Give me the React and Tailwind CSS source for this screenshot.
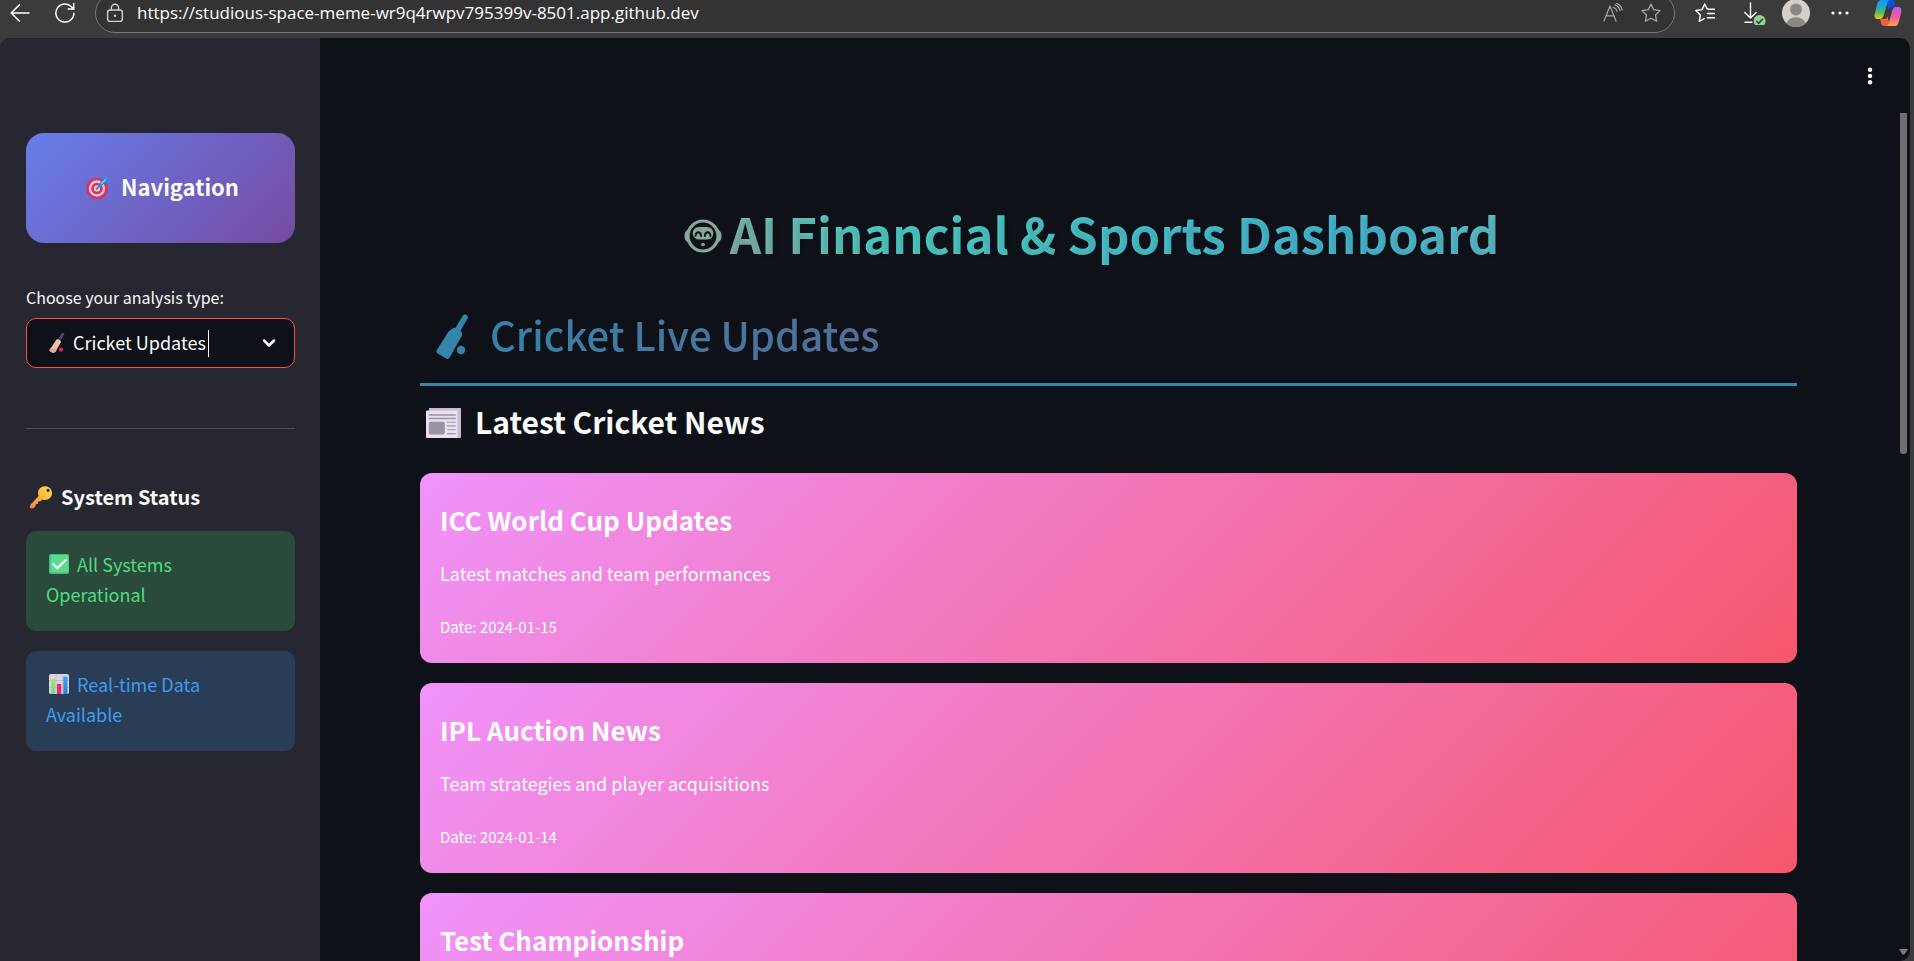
import React from "react";

const NEWS = [
  { title: "ICC World Cup Updates", text: "Latest matches and team performances", date: "2024-01-15" },
  { title: "IPL Auction News", text: "Team strategies and player acquisitions", date: "2024-01-14" },
  { title: "Test Championship" },
];

const line = { fill: "none", stroke: "currentColor", strokeLinecap: "round", strokeLinejoin: "round" };

function BackIcon() {
  return (
    <svg className="h-5 w-5" viewBox="0 0 20 20" {...line} strokeWidth="1.5">
      <path d="M19 10H1.5M9.5 1.8 1.2 10l8.3 8.2" />
    </svg>
  );
}

function ReloadIcon() {
  return (
    <svg className="h-5 w-5" viewBox="0 0 20 20" {...line} strokeWidth="1.5">
      <path d="M18.9 10.2A9 9 0 1 1 16.4 3.8L18.6 6" />
      <path d="M18.7.6v5.5h-5.4" />
    </svg>
  );
}

function LockIcon() {
  return (
    <svg className="h-5 w-5" viewBox="0 0 20 20" {...line} strokeWidth="1.4">
      <rect x="2.6" y="7" width="14.8" height="11.4" rx="2.4" />
      <path d="M6.4 7V4.8a3.6 3.6 0 0 1 7.2 0V7" />
      <circle cx="10" cy="12.7" r="1.2" fill="currentColor" stroke="none" />
    </svg>
  );
}

function ReadAloudIcon() {
  return (
    <svg className="h-5 w-5" viewBox="0 0 20 20" {...line} strokeWidth="1.2">
      <path d="M1 18 7 3l6 15M3.2 12.8h7.6" />
      <path d="M10.6 4.4c1.8.7 3 2 3.5 3.8M12 1.9c2.6.9 4.4 3 5 5.800M13.800.4c3 1.200 4.800 3.600 5.400 6.800" />
    </svg>
  );
}

function StarIcon() {
  return (
    <svg className="h-5 w-5" viewBox="0 0 20 20" {...line} strokeWidth="1.3">
      <path d="m10 1 2.700 5.700 6.300.9-4.500 4.400 1.100 6.300L10 15.300l-5.600 3 1.100-6.300L1 7.600l6.300-.9z" />
    </svg>
  );
}

function FavoritesIcon() {
  return (
    <svg className="h-5 w-5" viewBox="0 0 20 20" {...line} strokeWidth="1.4">
      <path d="M19.500 6.300h-5.800L12 5.600 9.700 1 7.100 6.600l-6.300.9 4.600 4.400-1.100 6.500 5.300-2.900" />
      <path d="M12.400 10.500h7.100M12.400 14.800h7.100" />
    </svg>
  );
}

function DownloadIcon() {
  return (
    <svg className="h-6 w-6" viewBox="0 0 24 24" {...line} strokeWidth="1.4">
      <path d="M8.500 2v15M2.800 11.500l5.700 5.600 5.700-5.600M3 21.300h7" />
      <circle cx="17.600" cy="20" r="6" fill="#8fd694" stroke="none" />
      <path d="m14.800 20.200 2 2 3.800-4" stroke="#2f3a30" strokeWidth="1.500" />
    </svg>
  );
}

function AvatarIcon() {
  return (
    <svg className="h-7 w-7" viewBox="0 0 28 28">
      <clipPath id="avatar-clip"><circle cx="14" cy="14" r="14" /></clipPath>
      <g clipPath="url(#avatar-clip)">
        <rect width="28" height="28" fill="#d3d0cc" />
        <circle cx="14" cy="10.500" r="6" fill="#8b8784" />
        <ellipse cx="14" cy="26" rx="9.800" ry="7.800" fill="#8b8784" />
      </g>
    </svg>
  );
}

function CopilotIcon() {
  return (
    <svg className="h-7 w-7" viewBox="0 0 28 28">
      <defs>
        <linearGradient id="cp-left" x1="0" y1="0" x2="0" y2="1">
          <stop offset="0" stopColor="#1795f2" /><stop offset=".35" stopColor="#1ba9d8" />
          <stop offset=".65" stopColor="#58b85c" /><stop offset="1" stopColor="#f2c811" />
        </linearGradient>
        <linearGradient id="cp-right" x1="0" y1="0" x2="0" y2="1">
          <stop offset="0" stopColor="#b05df0" /><stop offset=".5" stopColor="#ee5a9b" />
          <stop offset="1" stopColor="#ffa04d" />
        </linearGradient>
        <linearGradient id="cp-top" x1="0" y1="0" x2="1" y2="1">
          <stop offset="0" stopColor="#0a5fe0" /><stop offset="1" stopColor="#163fb8" />
        </linearGradient>
      </defs>
      <path d="M12 1h5.500c1.800 0 2.800 1 3.300 2.700l1.300 4.300h-4.300c-1.800 0-2.800.9-3.300 2.500z" fill="url(#cp-top)" />
      <path d="M16 27h-5.500c-1.800 0-2.800-1-3.300-2.700L6 20h4.300c1.800 0 2.800-.9 3.300-2.500z" fill="#f4603a" />
      <path d="M7.500 1h8.300c-1.300.3-2 1.300-2.500 3l-3.600 12.500c-.7 2.400-1.900 3.500-4.200 3.500H3.800C1 20 0 17.800.7 15L3.400 4.600C4 2.200 5.300 1 7.500 1z" fill="url(#cp-left)" />
      <path d="M20.500 27h-8.300c1.300-.3 2-1.300 2.500-3l3.600-12.500c.7-2.400 1.900-3.500 4.200-3.500h1.700c2.800 0 3.800 2.200 3.100 5l-2.700 10.400c-.6 2.400-1.900 3.600-4.100 3.600z" fill="url(#cp-right)" />
    </svg>
  );
}

function TargetIcon() {
  return (
    <svg className="h-6 w-6" viewBox="0 0 24 24">
      <circle cx="11" cy="13.500" r="10.800" fill="#dd2f5c" />
      <circle cx="11" cy="13.500" r="8.200" fill="#d8c8de" />
      <circle cx="11" cy="13.500" r="5.800" fill="#dd2f5c" />
      <circle cx="11" cy="13.500" r="3.200" fill="#d8c8de" />
      <path d="m10.500 14 6-6" stroke="#5b6678" strokeWidth="1.500" strokeLinecap="round" />
      <path d="m11.800 9.800 5.500-5.300L18.500 0l2 2.800L24 4.500l-1.500 3-4 .8-5 4.400z" fill="#2490dd" />
      <path d="m15 9 5-5" stroke="#6fd0fa" strokeWidth="1.200" />
    </svg>
  );
}

function BatIcon() {
  return (
    <svg className="h-5 w-4" viewBox="0 0 16 20">
      <path d="m13.800 1.200-4.600 7" stroke="#533e78" strokeWidth="3" strokeLinecap="round" />
      <path d="M7.700 6.300c1.600-.2 4 1 4.300 2.800L6.300 19c-1.800 1.500-5 .2-6-1.500z" fill="#ffbfa6" />
      <path d="m2 14.300 5.700 2.400L6.300 19c-1.800 1.500-5 .2-6-1.500z" fill="#ee9fae" />
      <circle cx="12" cy="16.500" r="2.200" fill="#ca2c55" />
    </svg>
  );
}

function BatSilhouette() {
  return (
    <svg className="h-[52px] w-8 text-[#3385aa]" viewBox="0 -6 32 52" fill="currentColor">
      <path d="M29 3.300 21.500 16" stroke="currentColor" strokeWidth="5.600" strokeLinecap="round" />
      <path d="M15.800 15c2-1.600 4.500-1.400 6.600-.2 2.400 1.400 4 3.500 3.600 6.200-.1.700-.4 1.400-.8 2L13.700 43.600c-.8 1.300-2 1.700-3.300 1L1.600 39.500c-1.300-.8-1.600-1.900-.9-3.200L12.500 17.500z" />
      <circle cx="25" cy="36" r="4.200" />
    </svg>
  );
}

function KeyIcon() {
  return (
    <svg className="h-6 w-6" viewBox="0 0 24 24">
      <defs>
        <linearGradient id="key-fill" x1="1" y1="0" x2="0" y2="1">
          <stop offset="0" stopColor="#ffe14a" /><stop offset=".5" stopColor="#fbb43e" /><stop offset="1" stopColor="#ef7f4e" />
        </linearGradient>
      </defs>
      <path fillRule="evenodd" fill="url(#key-fill)" d="M16 1.200c4 0 7 3 7 6.800 0 4.100-3 7-7 7-1 0-2-.2-2.800-.6l-1.700 1.800-2.300.4-.2 2.200-2.200.4-.3 2L4.400 23.300c-.6.4-3 .4-3.300-.2-.4-.7-.3-2.600.2-3.200l8.300-8.900c-.4-.9-.6-1.900-.6-3 0-3.800 3-6.800 7-6.800zm3 2.500a1.600 1.600 0 1 0 .1 3.200A1.600 1.600 0 0 0 19 3.700z" />
    </svg>
  );
}

function CheckIcon() {
  return (
    <svg className="h-5 w-5" viewBox="0 0 20 20">
      <rect width="20" height="20" rx="1.800" fill="#44b583" />
      <rect x="1.500" y="1" width="18" height="17.500" rx="1" fill="#5bdb92" />
      <path d="m4.300 10.200 4 4L16.700 6" fill="none" stroke="#fff" strokeWidth="2.200" strokeLinecap="round" strokeLinejoin="round" />
    </svg>
  );
}

function ChartIcon() {
  return (
    <svg className="h-5 w-5" viewBox="0 0 20 20">
      <defs>
        <linearGradient id="bar-green" x1="0" y1="0" x2="0" y2="1"><stop offset="0" stopColor="#b4e44a" /><stop offset="1" stopColor="#62e29a" /></linearGradient>
        <linearGradient id="bar-blue" x1="0" y1="0" x2="0" y2="1"><stop offset="0" stopColor="#31aaf5" /><stop offset="1" stopColor="#2d7bd0" /></linearGradient>
      </defs>
      <rect width="20" height="20" rx="1.800" fill="#dcd4e4" />
      <path d="M0 6.500h20M0 13.500h20M7 0v20M13.300 0v20" stroke="#b9adc4" strokeWidth=".7" />
      <path d="M2 5h4v15H2z" fill="url(#bar-green)" />
      <path d="M8 10h4.200v10H8z" fill="#e22d68" />
      <path d="M14.300 2.500h4.200V20h-4.200z" fill="url(#bar-blue)" />
    </svg>
  );
}

function RobotIcon() {
  return (
    <svg className="h-10 w-[38px] text-[#86a79c]" viewBox="0 -6 38 40">
      <circle cx="19" cy="17" r="15" fill="none" stroke="currentColor" strokeWidth="3.200" />
      <path d="M4 10.500C1.300 12 .5 14 .5 17S1.300 22 4 23.500zM34 10.500c2.700 1.500 3.500 3.500 3.500 6.500s-.8 5-3.500 6.500z" fill="currentColor" />
      <rect x="8.700" y="8" width="20.600" height="12.600" rx="6.300" fill="currentColor" />
      <path d="M11.500 17c.4-5 5.200-5 5.600 0M20.900 17c.4-5 5.200-5 5.600 0" fill="none" stroke="#0e1117" strokeWidth="1.900" strokeLinecap="round" />
      <ellipse cx="19" cy="25.500" rx="2" ry="1.500" fill="currentColor" />
    </svg>
  );
}

function NewspaperIcon() {
  return (
    <svg className="h-[34px] w-[35px]" viewBox="0 -4 35 34">
      <path d="M3 0h31c.6 0 1 .4 1 1v28c0 .6-.4 1-1 1H4z" fill="#c8b9d6" />
      <path d="M0 3.500c0-.6.400-1 1-1h30.500V30H1c-.6 0-1-.4-1-1z" fill="#e9e0f2" />
      <path d="M2.800 7h27M2.800 10.500h27" stroke="#9b94a2" strokeWidth="1.700" />
      <rect x="2.800" y="13.700" width="16" height="12.700" rx="2" fill="#9b94a2" />
      <path d="M21 14.300h8.800M21 17.900h8.800M21 21.700h8.800M21 25.600h8.800" stroke="#9b94a2" strokeWidth="1.100" />
    </svg>
  );
}

function BrowserBar() {
  return (
    <header className="flex h-[38px] shrink-0 items-end overflow-hidden bg-[#3b3b3b] pb-[5px] text-white">
      <div className="flex h-10 w-full items-center pl-[10px] pr-3">
        <button aria-label="Back"><BackIcon /></button>
        <button aria-label="Reload" className="ml-[25px]"><ReloadIcon /></button>
        <div className="ml-5 flex h-10 flex-1 items-center rounded-[20px] border border-[#767676] bg-[#333333] pl-[9px] pr-[13px]">
          <span className="text-[#d0d0d0]"><LockIcon /></span>
          <input
            aria-label="Address"
            className="ml-3 min-w-0 flex-1 bg-transparent font-['Open_Sans',sans-serif] text-[17px] text-white outline-none"
            defaultValue="https://studious-space-meme-wr9q4rwpv795399v-8501.app.github.dev"
          />
          <button aria-label="Read aloud" className="text-[#a8a8a8]"><ReadAloudIcon /></button>
          <button aria-label="Add to favorites" className="ml-[18px] text-[#a8a8a8]"><StarIcon /></button>
        </div>
        <div className="flex items-center gap-5 pl-5">
          <button aria-label="Favorites"><FavoritesIcon /></button>
          <div className="flex items-center gap-4 pl-[7px]">
            <button aria-label="Downloads"><DownloadIcon /></button>
            <button aria-label="Profile"><AvatarIcon /></button>
          </div>
          <button aria-label="More">
            <svg className="h-5 w-5" viewBox="0 0 20 20" fill="currentColor">
              <circle cx="3" cy="10" r="1.600" /><circle cx="10" cy="10" r="1.600" /><circle cx="17" cy="10" r="1.600" />
            </svg>
          </button>
          <button aria-label="Copilot" className="pl-1"><CopilotIcon /></button>
        </div>
      </div>
    </header>
  );
}

function Sidebar() {
  return (
    <aside className="flex w-80 shrink-0 flex-col bg-[#262730] pt-[95px] pr-[25px] pl-[26px]">
      <h2 className="flex h-[110px] items-center justify-center gap-[11px] rounded-[18px] bg-[linear-gradient(135deg,#667eea_0%,#764ba2_100%)] pb-[3px] pl-1 text-[22px] font-bold">
        <TargetIcon />
        Navigation
      </h2>
      <label htmlFor="analysis" className="mt-[42px] text-[16px] leading-6">Choose your analysis type:</label>
      <div className="mt-[9px] flex h-[50px] items-center rounded-[10px] border border-[#ff4b4b] bg-[#0e1117] pl-[22px] pr-[17px]">
        <BatIcon />
        <select id="analysis" className="ml-2 field-sizing-content appearance-none bg-transparent pb-[3px] text-[18px] leading-7 outline-none">
          <option>Cricket Updates</option>
        </select>
        <span className="ml-[2px] h-[27px] w-px bg-white" />
        <svg className="ml-auto h-4 w-4" viewBox="0 0 16 16" {...line} strokeWidth="2.500">
          <path d="m3 5.500 5 5 5-5" />
        </svg>
      </div>
      <hr className="mt-[60px] border-[#4b4c54]" />
      <h3 className="mt-[54px] flex h-7 items-center gap-2 pl-[3px] text-[20px] font-bold">
        <KeyIcon />
        System Status
      </h3>
      <div className="mt-5 rounded-[10px] bg-[#2a4a3b] px-5 pt-[18px] pb-[22px] text-[18px] leading-[30px] text-[#50dc7b]">
        <p className="flex items-center gap-2 pl-[3px]"><CheckIcon />All Systems</p>
        <p>Operational</p>
      </div>
      <div className="mt-5 rounded-[10px] bg-[#2a3d57] px-5 pt-[18px] pb-[22px] text-[18px] leading-[30px] text-[#3d9df3]">
        <p className="flex items-center gap-2 pl-[3px]"><ChartIcon />Real-time Data</p>
        <p>Available</p>
      </div>
    </aside>
  );
}

function NewsCard({ title, text, date }) {
  return (
    <article className="h-[190px] shrink-0 rounded-[12px] bg-[linear-gradient(135deg,#f093fb_0%,#f5576c_100%)] px-5 pt-[27px] text-white">
      <h4 className="text-[26px] leading-10 font-bold">{title}</h4>
      {text && <p className="mt-[18px] text-[18px] leading-[30px]">{text}</p>}
      {date && <p className="mt-6 text-[15px] leading-[30px]">Date: {date}</p>}
    </article>
  );
}

export default function App() {
  return (
    <div className="flex h-screen flex-col overflow-hidden bg-[#3b3b3b] font-['Noto_Sans_CJK_SC',sans-serif] text-[#fafafa]">
      <BrowserBar />
      <div className="mr-1 flex min-h-0 flex-1 overflow-hidden rounded-[10px] rounded-bl-none bg-[#0e1117]">
        <Sidebar />
        <main className="flex min-w-0 flex-1 flex-col overflow-hidden pl-[100px]">
          <div className="flex justify-end pt-7 pr-[17px]">
            <button aria-label="Main menu">
              <svg className="h-5 w-5" viewBox="0 0 20 20" fill="currentColor">
                <circle cx="10" cy="3.800" r="2.200" /><circle cx="10" cy="10" r="2.200" /><circle cx="10" cy="16.200" r="2.200" />
              </svg>
            </button>
          </div>
          <div className="flex flex-col pt-28 pr-[100px]">
            <h1 className="flex items-center justify-center gap-2 bg-[linear-gradient(45deg,#ff6b6b,#4ecdc4,#45b7d1,#96ceb4)] bg-clip-text pr-[34px] text-[49px] leading-[70px] font-bold text-transparent [text-shadow:2px_2px_4px_rgba(0,0,0,0.1)]">
              <RobotIcon />
              AI Financial &amp; Sports Dashboard
            </h1>
            <h2 className="mt-9 flex items-center gap-[22px] border-b-[3px] border-[#2e86ab] bg-[linear-gradient(90deg,#2e86ab,#a23b72)] bg-clip-text pb-[19px] pl-4 text-[40px] leading-[60px] font-medium text-transparent">
              <BatSilhouette />
              Cricket Live Updates
            </h2>
            <h3 className="mt-[14px] flex items-center gap-[14px] pl-[6px] text-[30px] leading-[42px] font-bold">
              <NewspaperIcon />
              Latest Cricket News
            </h3>
            <div className="mt-[31px] flex flex-col gap-5">
              {NEWS.map((item) => <NewsCard key={item.title} {...item} />)}
            </div>
          </div>
        </main>
        <div aria-hidden="true" className="flex w-[13px] shrink-0 flex-col items-center justify-between pt-[75px] pr-[1px] pb-[6px]">
          <div className="h-[341px] w-[7px] rounded-b-[3px] bg-[#6e6f73]" />
          <svg className="h-[6px] w-[9px]" viewBox="0 0 9 6" fill="#77787b"><path d="M0 0h9L5.500 5.500h-2z" /></svg>
        </div>
      </div>
    </div>
  );
}
